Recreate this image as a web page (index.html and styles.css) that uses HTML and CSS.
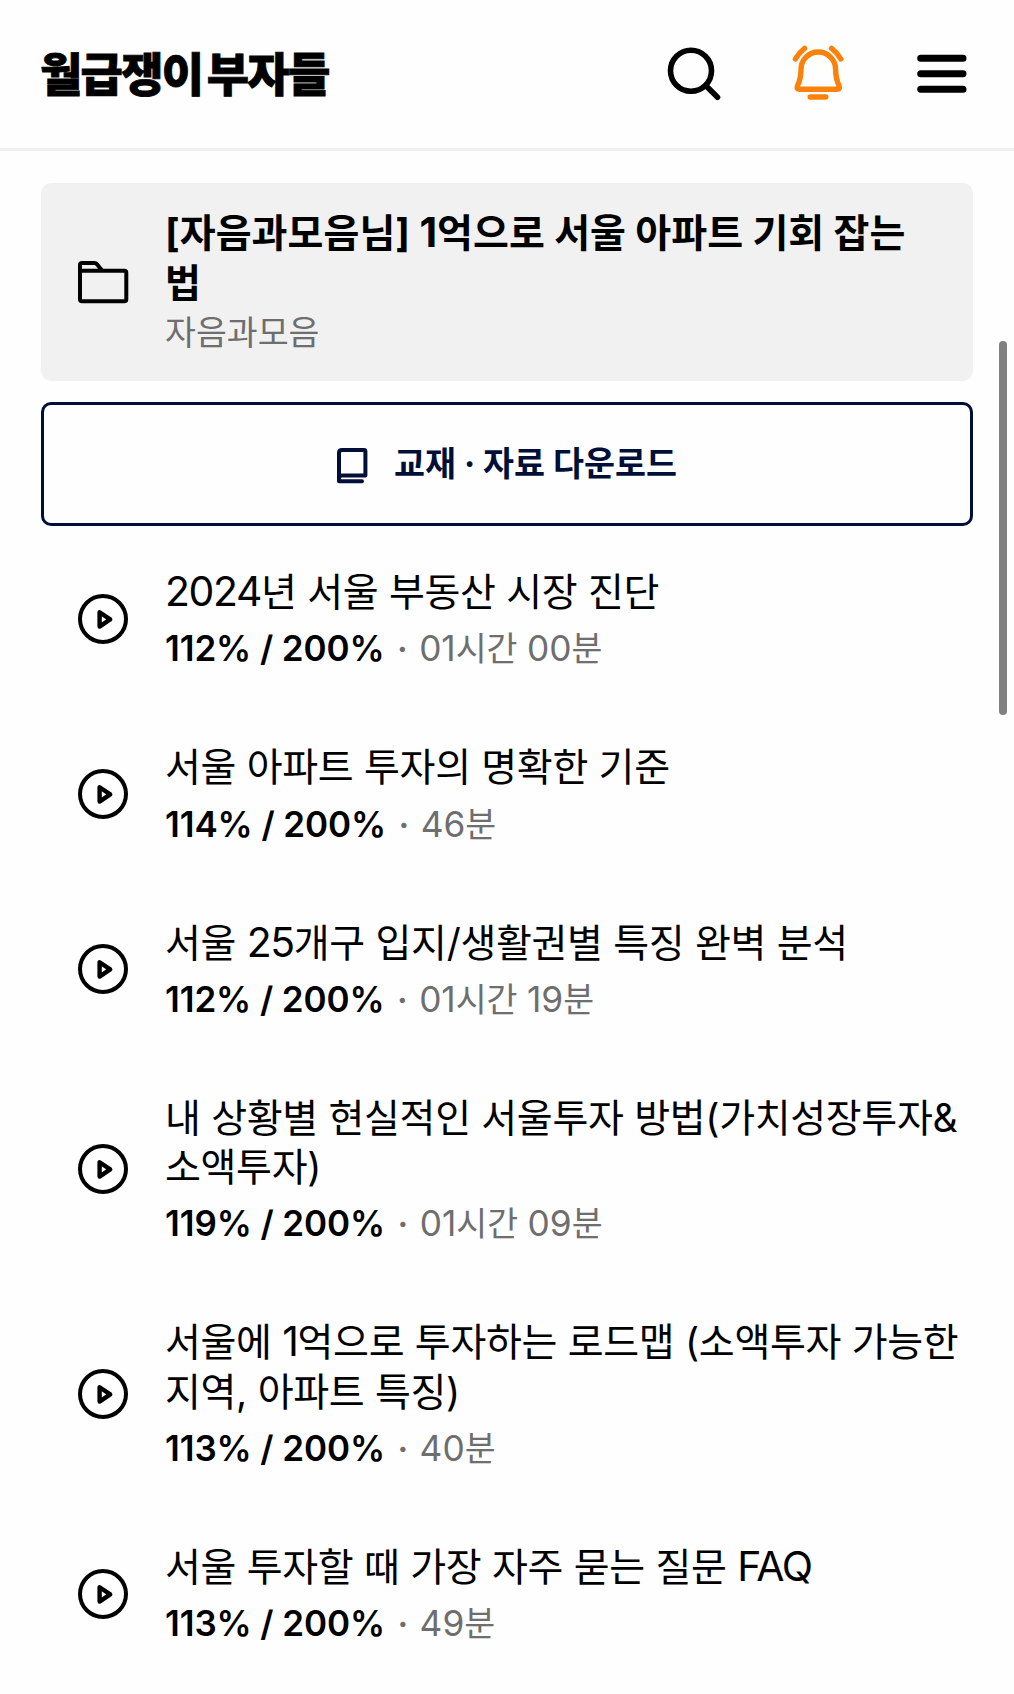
FILE: index.html
```html
<!DOCTYPE html>
<html lang="ko">
<head>
  <meta charset="UTF-8" />
  <title>월급쟁이부자들</title>
  <link rel="stylesheet" href="styles.css">
</head>
<body>
  <!-- 강의 목록에서 반복되는 재생 아이콘 -->
  <svg class="sprite">
    <symbol id="play" viewBox="0 0 50 50">
      <circle cx="25" cy="25" r="23" stroke-width="4" />
      <path d="M21.6 18.2v14.4l10.6-7.2z" stroke-width="4.4" />
    </symbol>
  </svg>

  <header class="header">
    <h1 class="logo">월급쟁이 부자들</h1>
    <nav class="menu">
      <svg class="menu-icon" viewBox="0 0 54 54">
        <circle cx="24" cy="23.7" r="20.5" stroke-width="5.6" />
        <path d="M39.5 39.2L50.5 50.2" stroke-width="5.6" />
      </svg>
      <svg class="menu-icon bell" viewBox="0 0 54 54">
        <path d="M10 22.3A17.3 17.3 0 0 1 44.6 22.3C44.6 30 45.8 34 48 38.6C49.2 41 48.4 42.3 46.4 42.3H8.2C6.2 42.3 5.4 41 6.6 38.6C8.8 34 10 30 10 22.3Z" stroke-width="5.4" />
        <path d="M19.2 50H34.8M4.4 12Q8 5.5 13.6 1.4M49.8 12Q46.2 5.5 40.6 1.4" stroke-width="5.4" />
      </svg>
      <svg class="menu-icon" viewBox="0 0 54 54">
        <path d="M5.7 11.3H48M5.7 26.8H48M5.7 42.3H48" stroke-width="7" />
      </svg>
    </nav>
  </header>

  <main class="content">
    <section class="course">
      <svg class="icon" viewBox="0 0 50 50">
        <path d="M24.3 13.7H46.3Q48.3 13.7 48.3 15.7V42.3Q48.3 44.3 46.3 44.3H4Q2 44.3 2 42.3V8Q2 6 4 6H16.5Q18 6 19 7.2L24.3 13.7H2" stroke-width="4" />
      </svg>
      <div>
        <h2 class="course-title">[자음과모음님] <span class="en">1</span>억으로 서울 아파트 기회 잡는<br>법</h2>
        <p class="author">자음과모음</p>
      </div>
    </section>

    <button class="download">
      <svg class="book" viewBox="0 0 31 36">
        <path d="M2 33.3V5Q2 2 5 2H27Q28.4 2 28.4 3.4V27.4H5Q2 27.4 2 30.4V33.3H25" stroke-width="4" />
      </svg>
      <span class="download-text">교재 · 자료 다운로드</span>
    </button>

    <ul class="lectures">
      <li class="lecture">
        <svg class="icon"><use href="#play" /></svg>
        <div>
          <p class="title"><span class="en">2024</span>년 서울 부동산 시장 진단</p>
          <p class="meta"><b>112% / 200%</b> <i>·</i> <span class="en">01</span>시간 <span class="en">00</span>분</p>
        </div>
      </li>
      <li class="lecture">
        <svg class="icon"><use href="#play" /></svg>
        <div>
          <p class="title">서울 아파트 투자의 명확한 기준</p>
          <p class="meta"><b>114% / 200%</b> <i>·</i> <span class="en">46</span>분</p>
        </div>
      </li>
      <li class="lecture">
        <svg class="icon"><use href="#play" /></svg>
        <div>
          <p class="title">서울 <span class="en">25</span>개구 입지/생활권별 특징 완벽 분석</p>
          <p class="meta"><b>112% / 200%</b> <i>·</i> <span class="en">01</span>시간 <span class="en">19</span>분</p>
        </div>
      </li>
      <li class="lecture">
        <svg class="icon"><use href="#play" /></svg>
        <div>
          <p class="title">내 상황별 현실적인 서울투자 방법(가치성장투자&amp;<br>소액투자)</p>
          <p class="meta"><b>119% / 200%</b> <i>·</i> <span class="en">01</span>시간 <span class="en">09</span>분</p>
        </div>
      </li>
      <li class="lecture">
        <svg class="icon"><use href="#play" /></svg>
        <div>
          <p class="title">서울에 <span class="en">1</span>억으로 투자하는 로드맵 (소액투자 가능한<br>지역, 아파트 특징)</p>
          <p class="meta"><b>113% / 200%</b> <i>·</i> <span class="en">40</span>분</p>
        </div>
      </li>
      <li class="lecture">
        <svg class="icon"><use href="#play" /></svg>
        <div>
          <p class="title">서울 투자할 때 가장 자주 묻는 질문 <span class="en">FAQ</span></p>
          <p class="meta"><b>113% / 200%</b> <i>·</i> <span class="en">49</span>분</p>
        </div>
      </li>
    </ul>
  </main>

  <div class="scrollbar"></div>
</body>
</html>
```

FILE: styles.css
```css
html, body {
  margin: 0;
  padding: 0;
  height: 100%;
  overflow: hidden;
  background-color: #fefefe;
  color: #000;
  font-family: Inter, "Noto Sans CJK KR", sans-serif;
}

h1, h2, p, ul {
  margin: 0;
  padding: 0;
}

svg {
  display: block;
  flex-shrink: 0;
  overflow: visible;
  fill: none;
  stroke: currentColor;
  stroke-linecap: round;
  stroke-linejoin: round;
}

.sprite {
  position: absolute;
  width: 0;
  height: 0;
}

.header {
  display: flex;
  align-items: center;
  justify-content: space-between;
  height: 148px;
  padding: 0 45px 0 40px;
  border-bottom: 3px solid #efefef;
}

.logo {
  padding-bottom: 7px;
  font-family: "Noto Sans CJK KR", sans-serif;
  font-size: 46px;
  font-weight: 900;
  line-height: 60px;
  letter-spacing: -1.7px;
  word-spacing: -7px;
  white-space: nowrap;
  -webkit-text-stroke: 0.8px #000;
}

.menu {
  display: flex;
  gap: 70px;
}

.menu-icon {
  width: 54px;
  height: 54px;
}

.bell {
  color: #fa820a;
}

.content {
  padding: 31.5px 41px 0;
}

.course {
  display: flex;
  align-items: center;
  gap: 37px;
  height: 198.5px;
  padding-left: 37px;
  border-radius: 10px;
  background-color: #f1f1f1;
  white-space: nowrap;
}

.icon {
  width: 50px;
  height: 50px;
}

.course-title {
  padding-top: 1px;
  font-size: 39px;
  font-weight: 700;
  line-height: 49.3px;
  letter-spacing: 0.05px;
}

.en {
  font-size: 1.05em;
  line-height: 1;
}

.author {
  margin-top: 3px;
  color: #6e6e6e;
  font-size: 33.6px;
  line-height: 46px;
}

.download {
  display: flex;
  align-items: center;
  justify-content: center;
  gap: 26px;
  width: 100%;
  height: 124px;
  margin-top: 21px;
  padding: 3px 0 0;
  border: 3px solid #000f37;
  border-radius: 10px;
  background-color: #fefefe;
  color: #000f37;
  font-family: inherit;
  font-size: 33.7px;
  font-weight: 700;
}

.download-text {
  padding-bottom: 9px;
}

.book {
  width: 31px;
  height: 36px;
}

.lectures {
  margin-top: 5px;
  list-style: none;
}

.lecture {
  display: flex;
  align-items: center;
  gap: 37px;
  padding: 35px 0 35px 37px;
  white-space: nowrap;
}

.title {
  padding-top: 1px;
  font-size: 39px;
  line-height: 49.3px;
  letter-spacing: -0.33px;
}

.title .en {
  letter-spacing: -1.4px;
}

.meta {
  margin: 8px 0 -2px;
  color: #6e6e6e;
  font-size: 33.6px;
  line-height: 49px;
}

.meta b {
  color: #000;
  font-size: 35px;
  font-weight: 600;
  line-height: 1;
  letter-spacing: -0.1px;
}

.meta i {
  margin: 0 2px 0 3px;
  font-style: normal;
  font-weight: 600;
}

/* 스크롤 위치 표시 */
.scrollbar {
  position: fixed;
  top: 341px;
  right: 7.5px;
  width: 8px;
  height: 374px;
  border-radius: 4px;
  background-color: #808080;
}
```
